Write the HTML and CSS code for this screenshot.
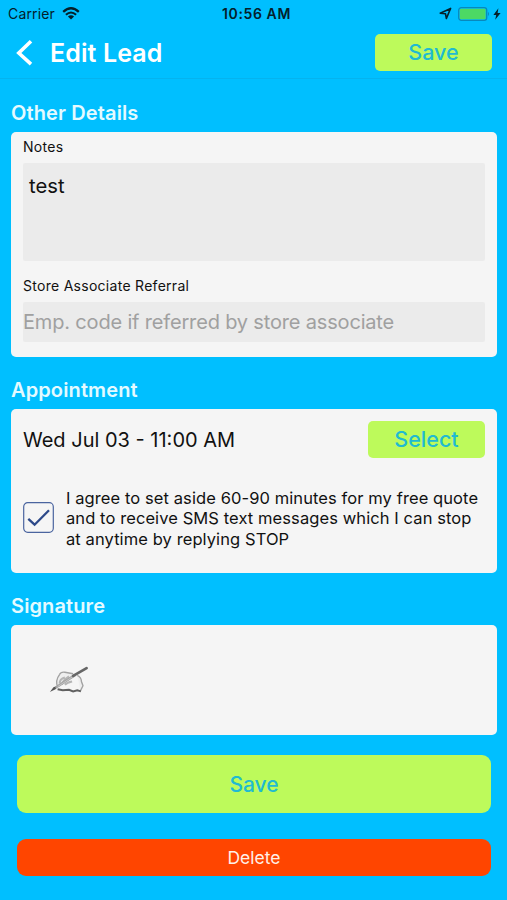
FILE: index.html
```html
<!DOCTYPE html>
<html lang="en">
<head>
  <meta charset="UTF-8" />
  <meta name="viewport" content="width=device-width, initial-scale=1.0" />
  <title>Edit Lead</title>
  <link rel="stylesheet" href="styles.css">
</head>
<body>
  <div class="status-bar">
    <div class="status-left">
      <span class="carrier">Carrier</span>
      <svg class="wifi" width="18" height="13" viewBox="0 0 18 13">
        <path d="M1.2 4.8 Q9 -2.2 16.8 4.8" fill="none" stroke="#04202b" stroke-width="2.3" />
        <path d="M3.9 7.8 Q9 3.2 14.1 7.8" fill="none" stroke="#04202b" stroke-width="2.1" />
        <path d="M9 12.6 L5.9 9.6 Q9 7 12.1 9.6 Z" fill="#04202b" />
      </svg>
    </div>
    <span class="clock">10:56 AM</span>
    <div class="status-right">
      <svg width="13" height="13" viewBox="0 0 13 13">
        <path d="M1.2 6.2 L11.6 1.4 L7.4 11.5 L6.5 6.8 Z" fill="none" stroke="#04202b" stroke-width="1.6" stroke-linejoin="round" />
      </svg>
      <svg width="33" height="14" viewBox="0 0 33 14">
        <rect x="0.7" y="0.7" width="28" height="12.6" rx="2.6" fill="none" stroke="#0888bd" stroke-width="1.3" />
        <rect x="1.8" y="1.8" width="25.8" height="10.4" rx="1.2" fill="#4cd964" />
        <path d="M30 4.8 Q32 7 30 9.2 Z" fill="#0888bd" />
      </svg>
      <svg width="8" height="12" viewBox="0 0 8 12">
        <path d="M5.4 0.2 L0.4 6.9 H3.2 L2.2 11.8 L7.6 4.9 H4.6 Z" fill="#04202b" />
      </svg>
    </div>
  </div>

  <header>
    <svg class="back" width="18" height="28" viewBox="0 0 18 28">
      <path d="M16 2.2 L3.8 14 L16 25.2" fill="none" stroke="#fff" stroke-width="3.6" />
    </svg>
    <h1>Edit Lead</h1>
    <button class="btn">Save</button>
  </header>

  <main>
    <section>
      <h2>Other Details</h2>
      <div class="card details">
        <label for="notes">Notes</label>
        <textarea id="notes">test</textarea>
        <label for="referral">Store Associate Referral</label>
        <input id="referral" type="text" placeholder="Emp. code if referred by store associate" />
      </div>
    </section>

    <section>
      <h2>Appointment</h2>
      <div class="card appointment">
        <div class="date-row">
          <span class="date">Wed Jul 03 - 11:00 AM</span>
          <button class="btn">Select</button>
        </div>
        <div class="agree-row">
          <svg class="checkbox" width="31" height="31" viewBox="0 0 31 31">
            <rect x="0.7" y="0.7" width="29.6" height="29.6" rx="4" fill="none" stroke="#4a649f" stroke-width="1.2" />
            <path d="M5.3 16.8 L11.6 22.7 L26 8.2" fill="none" stroke="#2d4989" stroke-width="2.3" />
          </svg>
          <p>I agree to set aside 60-90 minutes for my free quote<br>
            and to receive SMS text messages which I can stop<br>
            at anytime by replying STOP</p>
        </div>
      </div>
    </section>

    <section>
      <h2>Signature</h2>
      <div class="card signature">
        <svg width="42" height="29" viewBox="0 0 40 28">
          <path d="M9 20 Q6.5 14 11 8 Q12 5.5 16 6 L24 7.5 M28 9 Q32 11 32 15 L33.5 19 L31 24" fill="#eee" stroke="#a2a2a2" stroke-width="1.3" />
          <path d="M11 17 Q11 12 16 11 M13 18 Q14 14 20 10 M16 18 Q18 16 23 15" fill="none" stroke="#b5b5b5" stroke-width="2" />
          <path d="M9 22.5 L14 23.5 L20 23 L24 24.5 L28 23.5 L31.5 24.5" fill="none" stroke="#606060" stroke-width="1.9" />
          <path d="M1.5 25 L5 20.5 L9 19 L7 22.5 Z" fill="#555" />
          <path d="M7 21 L26 8.5" stroke="#a2a2a2" stroke-width="2.6" />
          <path d="M9 20 L25 9.3" stroke="#ccc" stroke-width="0.8" />
          <path d="M24 9.5 L37 2" stroke="#666" stroke-width="2.6" stroke-linecap="round" />
        </svg>
      </div>
    </section>

    <button class="save">Save</button>
    <button class="delete">Delete</button>
  </main>
</body>
</html>
```
FILE: styles.css
```css
* {
  box-sizing: border-box;
}
body {
  margin: 0;
  height: 900px;
  overflow: hidden;
  font-family: Inter, 'Liberation Sans', sans-serif;
  background: #00bfff;
  color: #111;
}
button {
  border: none;
  padding: 0;
  font-family: inherit;
}
.status-bar {
  display: grid;
  grid-template-columns: 1fr auto 1fr;
  align-items: center;
  height: 27px;
  padding: 0 6px 0 8px;
  font-size: 14px;
  color: #04202b;
}
.status-left {
  display: flex;
  align-items: center;
  gap: 7px;
}
.carrier {
  letter-spacing: 0.15px;
}
.clock {
  font-weight: 600;
  letter-spacing: 0.6px;
  padding-left: 4px;
}
.status-right {
  display: flex;
  align-items: center;
  justify-content: flex-end;
  gap: 6px;
}
.status-right svg:last-child {
  margin-left: -4px;
}
header {
  display: flex;
  align-items: center;
  height: 52px;
  padding: 0 15px;
  border-bottom: 1px solid #05b3ef;
}
h1 {
  flex: 1;
  margin: 0 0 0 17px;
  font-size: 25px;
  font-weight: 600;
  letter-spacing: 0.1px;
  color: #fff;
}
.btn {
  width: 117px;
  height: 37px;
  padding-bottom: 2px;
  border-radius: 5px;
  background: #bdfa5b;
  color: #20bad1;
  font-size: 21.5px;
  font-weight: 500;
}
main {
  padding: 20px 10px 0 11px;
}
h2 {
  margin: 0;
  height: 33px;
  line-height: 28px;
  font-size: 20px;
  font-weight: 600;
  letter-spacing: 0.12px;
  color: #e4faff;
}
.card {
  margin-bottom: 19px;
  padding: 0 12px;
  border-radius: 5px;
  background: #f5f5f5;
}
.details {
  display: flex;
  flex-direction: column;
  height: 225px;
}
label {
  height: 31px;
  line-height: 30px;
  font-size: 14px;
  letter-spacing: 0.28px;
}
textarea,
input {
  border: none;
  border-radius: 2px;
  outline: none;
  background: #ebebeb;
  font-family: inherit;
  color: #111;
}
textarea {
  height: 98px;
  margin-bottom: 10px;
  padding: 10px 6px;
  font-size: 20.3px;
  resize: none;
}
input {
  height: 40px;
  padding: 0;
  font-size: 20px;
  letter-spacing: -0.17px;
}
input::placeholder {
  color: #a0a0a0;
}
.appointment {
  height: 164px;
  padding-top: 12px;
}
.date-row {
  display: flex;
  align-items: center;
  justify-content: space-between;
}
.date {
  font-size: 20px;
  padding-top: 1px;
}
.agree-row {
  display: flex;
  align-items: center;
  gap: 12px;
  margin-top: 30px;
}
.checkbox {
  margin-bottom: 2px;
}
.agree-row p {
  margin: 0;
  font-size: 16.5px;
  letter-spacing: 0.09px;
  line-height: 20.3px;
  white-space: nowrap;
}
.signature {
  height: 110px;
  padding: 41px 0 0 37px;
}
.save,
.delete {
  display: block;
  width: 474px;
  margin-left: 6px;
  border-radius: 9px;
}
.save {
  height: 58px;
  margin-top: 20px;
  background: #bdfa5b;
  color: #20bad1;
  font-size: 21px;
  font-weight: 500;
}
.delete {
  height: 37px;
  margin-top: 26px;
  background: #ff4500;
  color: #fff0e8;
  font-size: 17.5px;
}
```
